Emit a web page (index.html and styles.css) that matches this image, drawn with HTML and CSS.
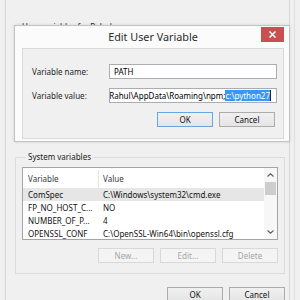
FILE: index.html
```html
<!DOCTYPE html>
<html lang="en">
<head>
    <meta charset="UTF-8">
    <title>Environment Variables</title>
    <link rel="stylesheet" href="styles.css">
</head>
<body>
<div class="screen">
    <div class="env-frame">
        <div class="env-window">
            <!-- user variables, mostly hidden under the edit dialog -->
            <div class="group group-user">
                <span class="group-title">User variables for Rahul</span>
            </div>

            <div class="group group-system">
                <span class="group-title">System variables</span>
                <div class="listview">
                    <div class="list-main">
                        <div class="list-head">
                            <div class="col col-name">Variable</div>
                            <div class="col col-value">Value</div>
                        </div>
                        <div class="list-row selected">
                            <div class="col col-name">ComSpec</div>
                            <div class="col col-value">C:\Windows\system32\cmd.exe</div>
                        </div>
                        <div class="list-row">
                            <div class="col col-name">FP_NO_HOST_C...</div>
                            <div class="col col-value">NO</div>
                        </div>
                        <div class="list-row">
                            <div class="col col-name">NUMBER_OF_P...</div>
                            <div class="col col-value">4</div>
                        </div>
                        <div class="list-row">
                            <div class="col col-name">OPENSSL_CONF</div>
                            <div class="col col-value">C:\OpenSSL-Win64\bin\openssl.cfg</div>
                        </div>
                    </div>
                    <div class="scrollbar">
                        <div class="sb-arrow">
                            <svg width="7" height="4" viewBox="0 0 7 4"><polyline points="0.5,3.5 3.5,0.8 6.5,3.5" fill="none" stroke="#606060" stroke-width="1.2"/></svg>
                        </div>
                        <div class="sb-thumb"></div>
                        <div class="sb-track"></div>
                        <div class="sb-arrow">
                            <svg width="7" height="4" viewBox="0 0 7 4"><polyline points="0.5,0.5 3.5,3.2 6.5,0.5" fill="none" stroke="#606060" stroke-width="1.2"/></svg>
                        </div>
                    </div>
                </div>
                <div class="btn-row">
                    <button class="btn" disabled>New...</button>
                    <button class="btn" disabled>Edit...</button>
                    <button class="btn" disabled>Delete</button>
                </div>
            </div>

            <div class="btn-row footer">
                <button class="btn">OK</button>
                <button class="btn">Cancel</button>
            </div>
        </div>
    </div>

    <!-- modal dialog on top of the environment window -->
    <div class="dialog">
        <div class="dialog-bar">
            <span></span>
            <span class="dialog-title">Edit User Variable</span>
            <span class="close-btn">
                <svg width="7" height="7" viewBox="0 0 7 7"><path d="M0.5 0.5L6.5 6.5M6.5 0.5L0.5 6.5" stroke="#fff" stroke-width="1.5"/></svg>
            </span>
        </div>
        <div class="dialog-client">
            <div class="form-grid">
                <label class="field-label">Variable name:</label>
                <div class="textbox">PATH</div>
                <label class="field-label">Variable value:</label>
                <div class="textbox textbox-scrolled">
                    <span>\Rahul\AppData\Roaming\npm;</span><span class="sel">c:\python27</span><span class="caret"></span>
                </div>
            </div>
            <div class="btn-row dialog-buttons">
                <button class="btn btn-default">OK</button>
                <button class="btn">Cancel</button>
            </div>
        </div>
    </div>
</div>
</body>
</html>
```

FILE: styles.css
```css
* {
    box-sizing: border-box;
}
body {
    margin: 0;
    width: 300px;
    height: 300px;
    overflow: hidden;
    background: #f0f0f0;
    font-family: "Noto Sans", "Open Sans", sans-serif;
    font-size: 8px;
    color: #1a1a1a;
}
.screen {
    position: relative;
    width: 300px;
    height: 300px;
    overflow: hidden;
}

/* background window */
.env-frame {
    width: 295px;
    height: 300px;
    border-right: 1px solid #dcdcdc;
}
.env-window {
    margin-left: 5px;
    width: 285px;
    height: 300px;
    border-left: 1px solid #d6d6d6;
    border-right: 1px solid #d6d6d6;
    padding: 28px 4px 0 9px;
}

.group {
    border: 1px solid #dcdcdc;
}
.group-title {
    display: block;
    width: fit-content;
    margin: -7px 0 0 4px;
    padding: 0 2px;
    line-height: 12px;
    background: #f0f0f0;
}
.group-user {
    height: 111px;
}
.group-user .group-title {
    margin-top: -8px;
}
.group-system {
    margin-top: 18px;
    padding: 0 6px 10px;
}

/* list view */
.listview {
    margin-top: 4px;
    height: 73px;
    border: 1px solid #a5a5a5;
    background: #fff;
    display: flex;
}
.list-main {
    flex: 1;
    overflow: hidden;
}
.list-head {
    display: flex;
    height: 20px;
    padding-top: 2px;
    color: #3b3b3b;
}
.list-head .col {
    line-height: 17px;
}
.list-row {
    display: flex;
    height: 13px;
    line-height: 13px;
    color: #111;
}
.list-row.selected {
    background: #e6e6e6;
}
.col {
    white-space: nowrap;
    overflow: hidden;
}
.col-name {
    width: 76px;
    flex: none;
    padding-left: 5px;
}
.list-head .col-name {
    border-right: 1px solid #e5e5e5;
}
.col-value {
    flex: 1;
    padding-left: 4px;
}

.scrollbar {
    width: 13px;
    display: flex;
    flex-direction: column;
    background: #f7f7f7;
}
.sb-arrow {
    height: 14px;
    display: flex;
    align-items: center;
    justify-content: center;
}
.sb-thumb {
    height: 13px;
    margin: 0 1px;
    background: #cdcdcd;
}
.sb-track {
    flex: 1;
}

/* buttons */
.btn-row {
    display: flex;
    justify-content: flex-end;
    gap: 6px;
}
.group-system .btn-row {
    margin-top: 8px;
}
.footer {
    margin-top: 13px;
}
.btn {
    width: 56px;
    height: 15px;
    padding: 0;
    border: 1px solid #acacac;
    background: linear-gradient(#f0f0f0, #e5e5e5);
    font-family: inherit;
    font-size: 8px;
    line-height: 13px;
    color: #111;
}
.btn:disabled {
    border-color: #d8d8d8;
    background: #f4f4f4;
    color: #a6a6a6;
}
.btn-default {
    border-color: #6aa5df;
}

/* edit dialog */
.dialog {
    position: absolute;
    left: 14px;
    top: 25px;
    width: 276px;
    border: 1px solid #c2c2c2;
    background: #fbfbfb;
    padding: 0 5px 2px 7px;
    box-shadow: 0 0 3px rgba(0, 0, 0, 0.12);
}
.dialog-bar {
    display: grid;
    grid-template-columns: 23px 1fr 23px;
    height: 22px;
}
.dialog-title {
    text-align: center;
    font-size: 10.8px;
    line-height: 22px;
    color: #2b2b2b;
}
.close-btn {
    margin-top: 1px;
    height: 15px;
    background: #c75050;
    display: flex;
    align-items: center;
    justify-content: center;
}
.dialog-client {
    height: 91px;
    border: 1px solid #d9d9d9;
    background: #f0f0f0;
    padding: 15px 6px 0 9px;
}
.form-grid {
    display: grid;
    grid-template-columns: 77px 1fr;
    grid-auto-rows: 15px;
    row-gap: 9px;
    align-items: center;
}
.field-label {
    color: #1e1e1e;
}
.textbox {
    height: 15px;
    border: 1px solid #abadb3;
    background: #fff;
    padding: 0 4px;
    line-height: 13px;
    color: #000;
    white-space: nowrap;
}
.textbox-scrolled {
    display: flex;
    justify-content: flex-end;
    align-items: center;
    overflow: hidden;
    padding: 0 5px 0 2px;
}
.textbox-scrolled span {
    flex: none;
}
.sel {
    background: #3399ff;
    color: #fff;
    line-height: 11px;
}
.caret {
    width: 1px;
    height: 11px;
    background: #222;
}
.dialog-buttons {
    margin-top: 9px;
    padding-right: 2px;
}
```
